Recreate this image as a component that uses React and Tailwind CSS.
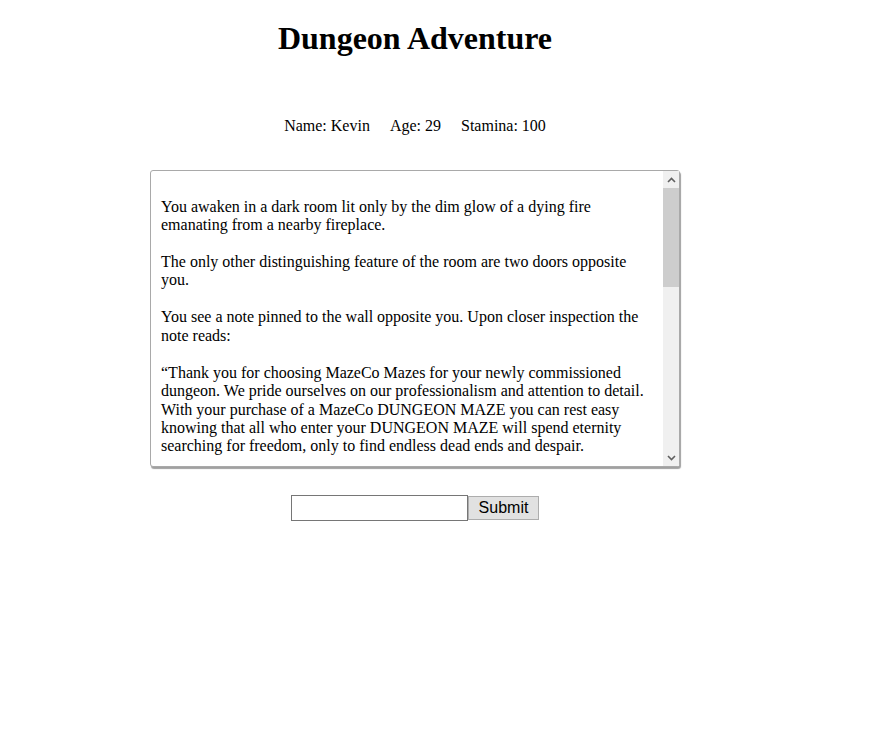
import React from "react";

const paragraphs = [
  "You awaken in a dark room lit only by the dim glow of a dying fire emanating from a nearby fireplace.",
  "The only other distinguishing feature of the room are two doors opposite you.",
  "You see a note pinned to the wall opposite you. Upon closer inspection the note reads:",
  "\u201CThank you for choosing MazeCo Mazes for your newly commissioned dungeon. We pride ourselves on our professionalism and attention to detail. With your purchase of a MazeCo DUNGEON MAZE you can rest easy knowing that all who enter your DUNGEON MAZE will spend eternity searching for freedom, only to find endless dead ends and despair.",
];

function Chevron({ up }) {
  return (
    <svg width="9" height="6" viewBox="0 0 9 6" className="block">
      <polyline
        points={up ? "1,5 4.5,1.5 8,5" : "1,1 4.5,4.5 8,1"}
        fill="none"
        stroke="#606060"
        strokeWidth="1.6"
      />
    </svg>
  );
}

export default function App() {
  return (
    <div className="w-[830px] flex flex-col items-center font-['Liberation_Serif',serif] text-black">
      <h1 className="mt-[20px] text-[32px] leading-[37px] font-bold">Dungeon Adventure</h1>

      <div className="mt-[60px] flex gap-5 text-[16px] leading-[18px]">
        <span>Name: Kevin</span>
        <span>Age: 29</span>
        <span>Stamina: 100</span>
      </div>

      <div className="mt-[35px] w-[530px] h-[297px] flex border border-[#a9a9a9] rounded-[3px] bg-white shadow-[1px_2px_1px_#a0a0a0]">
        <div className="flex-1 overflow-hidden px-[10px] pt-[26.6px] text-[16px] leading-[18.46px]">
          {paragraphs.map((p, i) => (
            <p key={i} className={i > 0 ? "mt-[18.46px]" : ""}>
              {p}
            </p>
          ))}
        </div>
        <div className="w-[16px] flex flex-col bg-[#f0f0f0]">
          <div className="h-[17px] flex items-center justify-center">
            <Chevron up />
          </div>
          <div className="h-[99px] bg-[#cdcdcd]" />
          <div className="flex-1" />
          <div className="h-[17px] flex items-center justify-center">
            <Chevron />
          </div>
        </div>
      </div>

      <div className="mt-[28px] flex items-center">
        <input
          type="text"
          className="w-[177px] h-[26px] border border-[#767676] bg-white px-1 outline-none"
        />
        <button className="w-[71px] h-[24px] border border-[#adadad] bg-[#e1e1e1] font-['Liberation_Sans',Arial,sans-serif] text-[16px] leading-[20px] text-black">
          Submit
        </button>
      </div>
    </div>
  );
}
